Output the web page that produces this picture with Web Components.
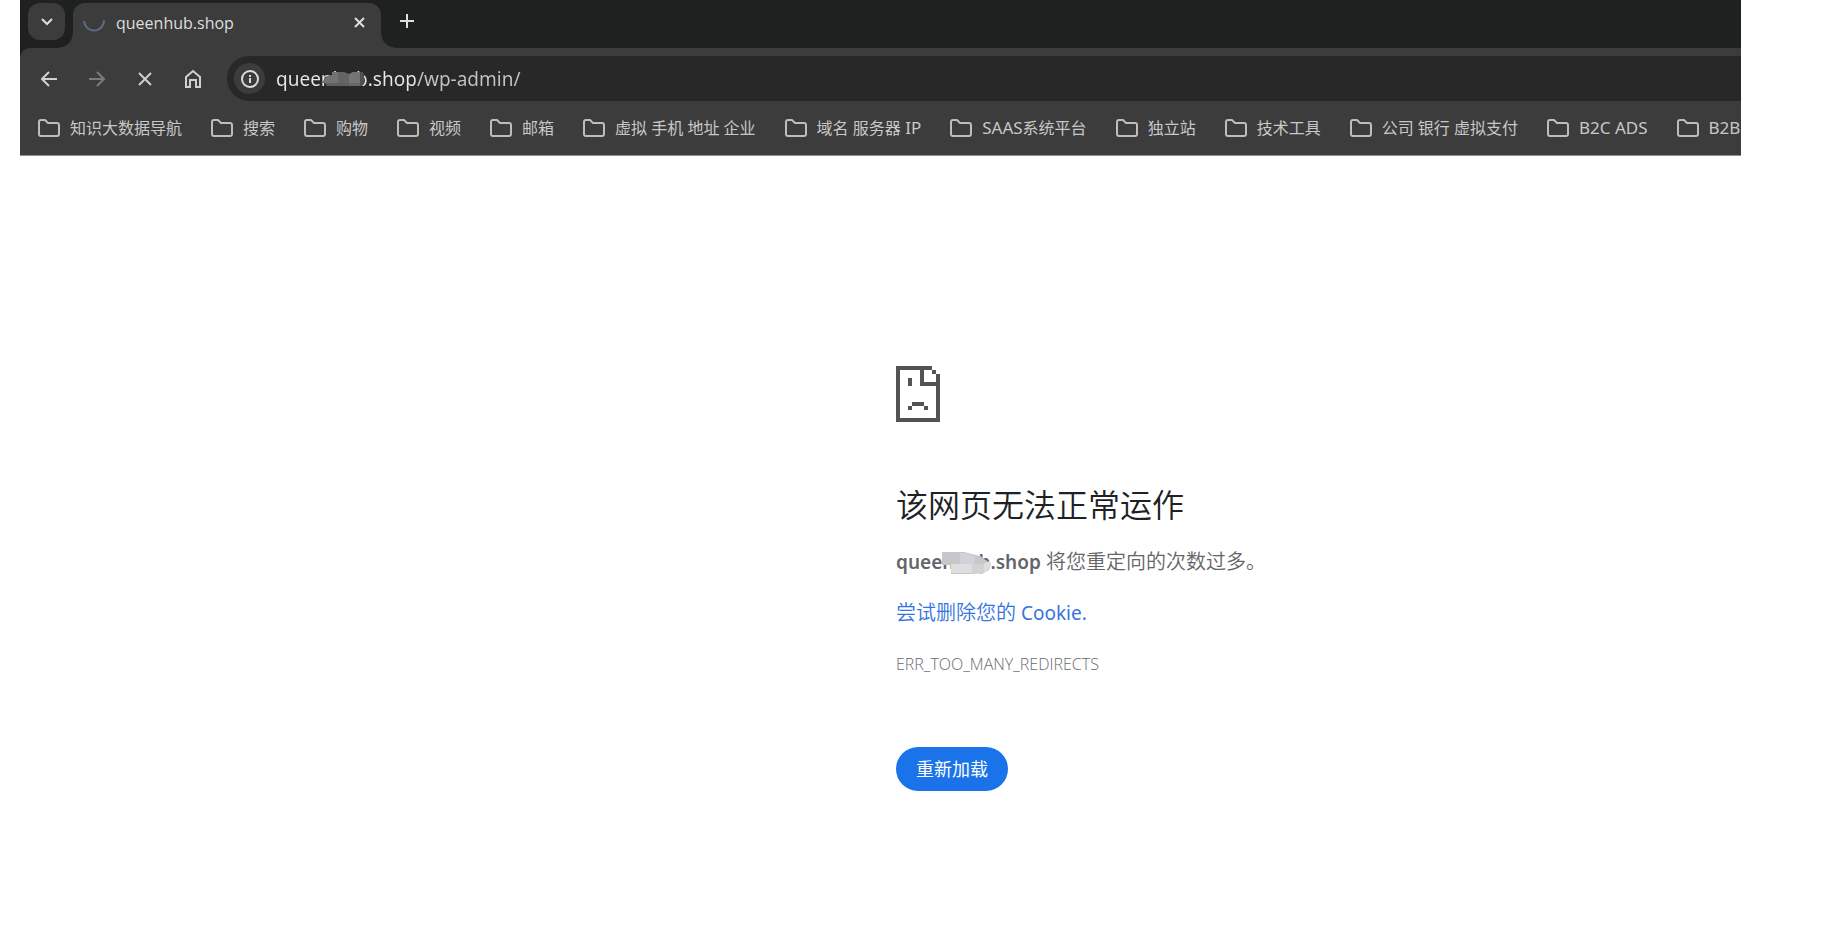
<!DOCTYPE html>
<html lang="zh-CN">
<head>
<meta charset="utf-8">
<title>queenhub.shop</title>
<style>
  body { margin: 0; background: #fff; font-family: "Noto Sans", "Noto Sans CJK SC", sans-serif; }
</style>
</head>
<body>
<app-page></app-page>
<script>
const define = (name, html, setup) => customElements.define(name, class extends HTMLElement {
  constructor() {
    super();
    this.attachShadow({ mode: "open" }).innerHTML = html;
  }
  connectedCallback() { if (setup) setup(this, this.shadowRoot); }
});

define("tool-button", `
<style>
  :host { display: block; }
  button { display: grid; place-items: center; width: 100%; height: 100%; padding: 0; border: 0; background: none; color: inherit; border-radius: inherit; }
</style>
<button type="button"><slot></slot></button>`, (el, root) => {
  root.querySelector("button").setAttribute("aria-label", el.getAttribute("label"));
});

define("tab-strip", `
<style>
  :host { display: flex; align-items: flex-start; height: 45px; padding: 3px 0 0 8px; color: #dedede; }
  svg { display: block; }
  .search { width: 37px; height: 37px; border-radius: 12px; background: #3c3c3c; }
  .tab { position: relative; display: flex; align-items: center; box-sizing: border-box; width: 308px; height: 45px; margin-left: 8px; padding: 0 11px 6px 10px; border-radius: 12px 12px 0 0; background: #3c3c3c; }
  .tab::before, .tab::after { content: ""; position: absolute; bottom: 0; width: 14px; height: 14px; }
  .tab::before { right: 100%; background: radial-gradient(circle at 0 0, transparent 13px, #3c3c3c 14px); }
  .tab::after { left: 100%; background: radial-gradient(circle at 100% 0, transparent 13px, #3c3c3c 14px); }
  .title { flex: 1; margin-left: 10px; font: 500 16px/24px "Open Sans", "Noto Sans", sans-serif; }
  .close { width: 22px; height: 22px; }
  .new { width: 36px; height: 36px; margin-left: 8px; }
</style>
<tool-button class="search" label="搜索标签页"><svg width="12" height="8" viewBox="0 0 12 8" fill="none" stroke="currentColor" stroke-width="2"><path d="M1 1l5 5 5-5"/></svg></tool-button>
<div class="tab">
  <svg width="23" height="24" viewBox="0 0 23 24" fill="none" stroke="#5a6a80" stroke-width="2"><path d="M1 10a10 10 0 0 0 20 -1"/></svg>
  <span class="title">queenhub.shop</span>
  <tool-button class="close" label="关闭"><svg width="11" height="11" viewBox="0 0 11 11" fill="none" stroke="currentColor" stroke-width="2"><path d="M1 1l9 9M10 1l-9 9"/></svg></tool-button>
</div>
<tool-button class="new" label="新标签页"><svg width="14" height="14" viewBox="0 0 14 14" fill="none" stroke="currentColor" stroke-width="2"><path d="M7 0v14M0 7h14"/></svg></tool-button>`);

define("address-bar", `
<style>
  :host { position: relative; display: flex; align-items: center; flex: 1; height: 45px; border-radius: 22px 0 0 22px; background: #282828; }
  .info { width: 31px; height: 31px; margin-left: 7px; border-radius: 50%; background: #3c3c3c; color: #dcdcdc; }
  input { flex: 1; min-width: 0; height: 30px; margin-left: 11px; padding: 0; border: 0; outline: 0;
    background: linear-gradient(90deg, #e8e8e8 139px, #c4c4c4 139px); -webkit-background-clip: text; background-clip: text;
    color: transparent; font: 19px/30px "Noto Sans", sans-serif; }
  .mosaic { position: absolute; left: 95px; top: 15px; }
</style>
<tool-button class="info" label="查看网站信息"><svg width="20" height="20" viewBox="0 0 20 20" fill="none" stroke="currentColor" stroke-width="2"><circle cx="10" cy="10" r="8"/><path d="M10 9v5M10 6v2"/></svg></tool-button>
<input aria-label="地址" value="queenhub.shop/wp-admin/" spellcheck="false">
<svg class="mosaic" width="44" height="16" viewBox="0 0 44 16"><path fill="#777176" d="M0 11L5 5 10 4V1h6v11H0z"/><path fill="#626666" d="M16 1h6l5 2v9H16z"/><path fill="#606060" d="M3 12h24v3H5z"/><path fill="#757575" d="M27 3l4-2h7v11H27z"/><path fill="#686868" d="M27 12h13v3H27z"/><path fill="#534d4d" d="M38 1h3l1 3v9l-2 2h-2z"/></svg>`);

define("nav-bar", `
<style>
  :host { display: flex; align-items: center; box-sizing: border-box; height: 60px; padding: 1px 0 0 11px; color: #d0d0d0; }
  .nav { width: 36px; height: 36px; margin-right: 12px; }
  .nav.off { color: #7c7c7c; }
  .home { margin-right: 6px; }
  address-bar { margin-left: 10px; }
  svg { display: block; }
</style>
<tool-button class="nav" label="后退"><svg width="16" height="16" viewBox="0 0 16 16" fill="none" stroke="currentColor" stroke-width="2"><path d="M16 8H2M8 1L1 8l7 7"/></svg></tool-button>
<tool-button class="nav off" label="前进"><svg width="16" height="16" viewBox="0 0 16 16" fill="none" stroke="currentColor" stroke-width="2"><path d="M0 8h14M8 1l7 7-7 7"/></svg></tool-button>
<tool-button class="nav" label="停止"><svg width="14" height="14" viewBox="0 0 14 14" fill="none" stroke="currentColor" stroke-width="2"><path d="M1 1l12 12M13 1L1 13"/></svg></tool-button>
<tool-button class="nav home" label="主页"><svg width="18" height="20" viewBox="0 0 18 20" fill="none" stroke="currentColor" stroke-width="2"><path d="M2 18V8l7-6 7 6v10h-4v-7H6v7z"/></svg></tool-button>
<address-bar></address-bar>`);

define("bookmark-folder", `
<style>
  :host { display: block; flex: none; }
  button { display: flex; align-items: center; gap: 10px; padding: 0; border: 0; background: none; color: #c8c8c8; font: 16px/24px "Noto Sans", "Noto Sans CJK SC", sans-serif; white-space: nowrap; }
  ::slotted(span) { font-size: 17px; }
</style>
<button type="button"><svg width="22" height="18" viewBox="0 0 22 18" fill="none" stroke="#bdbdbd" stroke-width="2" stroke-linejoin="round"><path d="M1 3Q1 1 3 1h4l3 3h9q2 0 2 2v9q0 2-2 2H3q-2 0-2-2z"/></svg><span><slot></slot></span></button>`);

define("bookmark-bar", `
<style>
  :host { display: flex; align-items: center; gap: 29px; box-sizing: border-box; height: 48px; padding: 0 0 7px 18px; overflow: hidden; border-bottom: 1px solid #8f8f8f; }
</style>
<slot></slot>`);

define("browser-chrome", `
<style>
  :host { display: block; margin: 0 89px 0 20px; overflow: hidden; background: #1f2120; }
  .bars { border-top-left-radius: 10px; background: #3c3c3c; }
</style>
<tab-strip></tab-strip>
<div class="bars"><nav-bar></nav-bar><slot></slot></div>`);

define("error-page", `
<style>
  :host { display: block; box-sizing: border-box; padding: 210px 24px 40px calc(50vw - 19px); color: #646568; font-size: 20px; line-height: 30px; font-weight: 350; }
  svg { display: block; }
  h1 { margin: 59px 0 18px; font-size: 32px; line-height: 48px; font-weight: 350; color: #202124; }
  p { margin: 0 0 21px; }
  .host, .latin { font-size: 19px; }
  .latin { font-weight: 400; }
  .host { position: relative; font-weight: 600; }
  .mosaic { position: absolute; left: 46px; top: 3px; }
  a { color: #3474e0; text-decoration: none; }
  .code { margin: 0; font-family: "Open Sans", sans-serif; font-size: 16px; color: #68696c; }
  button { height: 44px; margin-top: 68px; padding: 0 20px; border: 0; border-radius: 22px; background: #1a73e8; color: #fff; font: 18px/24px "Noto Sans", "Noto Sans CJK SC", sans-serif; }
</style>
<svg width="44" height="56" viewBox="0 0 11 14" fill="#535353" shape-rendering="crispEdges"><path d="M0 0h9v1H7v3h3V2h1v12H0zM1 1v12h9V5H6V1zM9 1h1v1H9zM3 3h1v2H3zM4 9h3v1H4zM3 10h1v1H3zM7 10h1v1H7z" fill-rule="evenodd"/></svg>
<h1>该网页无法正常运作</h1>
<p><strong class="host">queenhub.shop<svg class="mosaic" width="49" height="22" viewBox="0 0 49 22"><path fill="#c6c7ca" d="M0 0h22l16 4 11 8-2 6-7 4H9v-9H0z"/><path fill="#d0d2d8" d="M18 1h5l10 3v8H18z"/><path fill="#dededf" d="M9 12h31l8-3 1 4-5 7-8 2-8-1H9z"/><path fill="#d2d2d2" d="M30 12h12v9H30z"/></svg></strong> 将您重定向的次数过多。</p>
<p><a href="#">尝试删除您的<span class="latin"> Cookie.</span></a></p>
<p class="code">ERR_TOO_MANY_REDIRECTS</p>
<button type="button">重新加载</button>`);

define("app-page", `
<style>:host { display: block; }</style>
<browser-chrome><bookmark-bar>
  <bookmark-folder>知识大数据导航</bookmark-folder>
  <bookmark-folder>搜索</bookmark-folder>
  <bookmark-folder>购物</bookmark-folder>
  <bookmark-folder>视频</bookmark-folder>
  <bookmark-folder>邮箱</bookmark-folder>
  <bookmark-folder>虚拟 手机 地址 企业</bookmark-folder>
  <bookmark-folder>域名 服务器<span> IP</span></bookmark-folder>
  <bookmark-folder><span>SAAS</span>系统平台</bookmark-folder>
  <bookmark-folder>独立站</bookmark-folder>
  <bookmark-folder>技术工具</bookmark-folder>
  <bookmark-folder>公司 银行 虚拟支付</bookmark-folder>
  <bookmark-folder><span>B2C ADS</span></bookmark-folder>
  <bookmark-folder><span>B2B</span></bookmark-folder>
</bookmark-bar></browser-chrome>
<error-page></error-page>`);
</script>
</body>
</html>
